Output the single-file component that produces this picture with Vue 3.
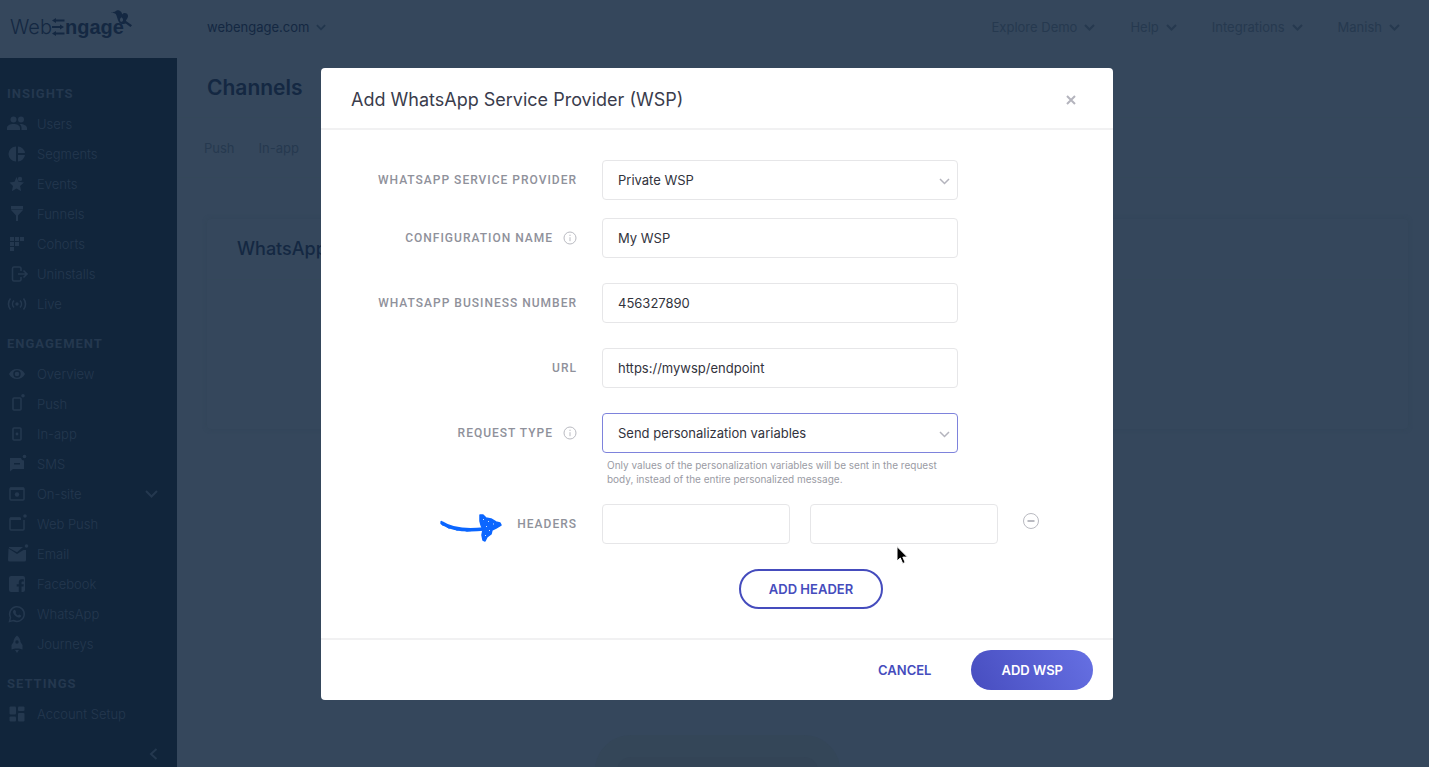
<template>
  <div class="page">
    <header class="topbar">
      <a href="#" class="logo" aria-label="WebEngage">
        <span class="logo-thin">Web</span>
        <svg class="logo-e" width="13" height="18" viewBox="0 0 13 18">
          <path d="M3 2.500h9.500M0 9h9M3 15.500h9.500" stroke="currentColor" stroke-width="2.200" />
          <path d="M0 2.500l4-2.500v5zM12 9l-4-2.500v5zM0 15.500l4-2.500v5z" fill="currentColor" />
        </svg>
        <span class="logo-bold">ngage</span>
        <svg class="logo-bird" width="21" height="18" viewBox="0 0 21 18">
          <path fill="currentColor" d="M0 2.500l3.800-.8C5 .300 6.700-.200 8.300.400c1.700.700 2.600 2.100 2.900 4 1.200-1.600 3.100-1.900 4.500-.9 1.700 1.200 1.600 3.300.5 4.900-.7 1-1.300 1.700-1.200 2.700l6 4.200-1.600 1.800-4.600-3.500c-2.700 1-5.900.2-7.200-2.200C6.500 9 6 6.300 4.800 3.900 3.800 3 1.800 3.200 0 2.500z" />
          <path fill="#35475c" d="M10.600 7.200c-1.600.8-2.300 3-.9 4.500.9.400 2-.2 2.300-1.300.200-1.200-.3-2.500-1.400-3.200z" />
        </svg>
      </a>
      <button class="site" type="button">
        webengage.com
        <svg class="caret" width="10" height="7" viewBox="0 0 11 7"><path d="M1 1l4.500 4.500L10 1" /></svg>
      </button>
      <nav class="top-nav">
        <button v-for="item in topLinks" :key="item" type="button">
          {{ item }}
          <svg class="caret" width="11" height="7" viewBox="0 0 11 7"><path d="M1 1l4.500 4.500L10 1" /></svg>
        </button>
      </nav>
    </header>

    <div class="columns">
      <aside class="sidebar">
        <section v-for="group in menu" :key="group.title" class="group">
          <h2>{{ group.title }}</h2>
          <a v-for="item in group.items" :key="item.name" href="#" class="item">
            <svg width="20" height="20" viewBox="0 0 20 20" v-html="item.icon"></svg>
            <span>{{ item.name }}</span>
            <svg v-if="item.open" class="expand" width="13" height="9" viewBox="0 0 13 9">
              <path d="M1 1l5.500 5.500L12 1" />
            </svg>
          </a>
        </section>
        <button class="collapse" type="button" aria-label="Collapse menu">
          <svg width="9" height="12" viewBox="0 0 9 12"><path d="M7.500 1L2 6l5.500 5" /></svg>
        </button>
      </aside>

      <main class="content">
        <h1>Channels</h1>
        <nav class="tabs">
          <a href="#">Push</a>
          <a href="#">In-app</a>
        </nav>
        <section class="card">
          <h3>WhatsApp</h3>
        </section>
      </main>
    </div>
    <div class="glow"></div>

    <div class="overlay">
      <form class="modal" role="dialog" aria-labelledby="modal-title" @submit.prevent>
        <div class="modal-head">
          <h2 id="modal-title">Add WhatsApp Service Provider (WSP)</h2>
          <button type="button" aria-label="Close">
            <svg width="10" height="10" viewBox="0 0 10 10"><path d="M1 1l8 8M9 1L1 9" /></svg>
          </button>
        </div>

        <div class="modal-body">
          <div class="row tight">
            <label for="provider">WHATSAPP SERVICE PROVIDER</label>
            <div class="control select">
              <select id="provider" v-model="form.provider">
                <option>Private WSP</option>
              </select>
              <svg width="11" height="7" viewBox="0 0 11 7"><path d="M1 1l4.500 4.500L10 1" /></svg>
            </div>
          </div>

          <div class="row">
            <label for="config">
              CONFIGURATION NAME
              <svg class="info" width="14" height="14" viewBox="0 0 14 14">
                <circle cx="7" cy="7" r="6" /><path d="M7 6.200v4M7 3.700v1.300" />
              </svg>
            </label>
            <input id="config" v-model="form.name" class="control" type="text" />
          </div>

          <div class="row">
            <label for="number">WHATSAPP BUSINESS NUMBER</label>
            <input id="number" v-model="form.number" class="control" type="text" />
          </div>

          <div class="row">
            <label for="url">URL</label>
            <input id="url" v-model="form.url" class="control" type="text" />
          </div>

          <div class="row tight">
            <label for="request">
              REQUEST TYPE
              <svg class="info" width="14" height="14" viewBox="0 0 14 14">
                <circle cx="7" cy="7" r="6" /><path d="M7 6.200v4M7 3.700v1.300" />
              </svg>
            </label>
            <div>
              <div class="control select active">
                <select id="request" v-model="form.type">
                  <option>Send personalization variables</option>
                </select>
                <svg width="11" height="7" viewBox="0 0 11 7"><path d="M1 1l4.500 4.500L10 1" /></svg>
              </div>
              <p class="help">
                Only values of the personalization variables will be sent in the request body, instead of
                the entire personalized message.
              </p>
            </div>
          </div>

          <div class="row headers">
            <label for="header-key">HEADERS</label>
            <svg class="pointer" width="64" height="30" viewBox="0 0 64 30">
              <path d="M3 10c9 6 24 8 42 6" fill="none" stroke="#0b66ff" stroke-width="3.500" stroke-linecap="round" />
              <path d="M2 8l2 4 3 0 3 3 4-1 4 3 5-1 5 2 6-1 5 0" fill="none" stroke="#0b66ff" stroke-width="1.500" />
              <path d="M41 2L44 2 47 5 52 6 57 9 61 10 62 12 57 15 53 17 52 21 48 24 46 28 44 27 43 22 44 17 42 12 41 8z" fill="#0b66ff" stroke="#0b66ff" stroke-width="1.500" stroke-linejoin="round" />
              <path d="M44 6l1 1M49 8l1 1M47 13l1 1M54 11l1 0M46 22l1 1M50 18l1-1" stroke="#cfe1ff" stroke-width="1" />
            </svg>
            <div class="pair">
              <input id="header-key" v-model="form.key" type="text" aria-label="Header key" />
              <input v-model="form.value" type="text" aria-label="Header value" />
              <button type="button" aria-label="Remove header">
                <svg width="18" height="18" viewBox="0 0 18 18">
                  <circle cx="9" cy="9" r="7.500" /><path d="M5.500 9h7" />
                </svg>
              </button>
              <svg class="cursor" width="14" height="21" viewBox="0 0 14 21">
                <path d="M2 1.500v14.500l3.300-3 2.400 5.500 2.500-1-2.400-5.400h4.700z" fill="#000" stroke="#fff" stroke-width="1" />
              </svg>
            </div>
          </div>

          <div class="row add">
            <button type="button" class="outline">ADD HEADER</button>
          </div>
        </div>

        <div class="modal-foot">
          <button type="button" class="cancel">CANCEL</button>
          <button type="submit" class="primary">ADD WSP</button>
        </div>
      </form>
    </div>
  </div>
</template>

<script setup>
import { reactive } from 'vue';

const topLinks = ['Explore Demo', 'Help', 'Integrations', 'Manish'];

const form = reactive({
  provider: 'Private WSP',
  name: 'My WSP',
  number: '456327890',
  url: 'https://mywsp/endpoint',
  type: 'Send personalization variables',
  key: '',
  value: '',
});

const line = 'fill="none" stroke="currentColor"';

const menu = [
  {
    title: 'INSIGHTS',
    items: [
      { name: 'Users', icon: '<circle cx="6.500" cy="5.500" r="3"/><circle cx="14" cy="5.500" r="3"/><path d="M0 16v-2c0-2.500 3-4 6.500-4s6.500 1.500 6.500 4v2zM14.500 16v-2c0-1.600-.7-3-2-4 4-.3 7.500 1.500 7.500 4v2z"/>' },
      { name: 'Segments', icon: '<path d="M9 2.500v15a7.500 7.500 0 0 1 0-15zM11 2.500a7.500 7.500 0 0 1 7 6.500h-7zM11 11h7a7.500 7.500 0 0 1-7 6.500z"/>' },
      { name: 'Events', icon: '<path d="M9.500 3l2 4.800 5.500.6-4 3.600 1.200 5.300-4.700-2.800-4.700 2.800L6 12 2.500 8.400l5-.6z"/><circle cx="13" cy="5" r="2.200"/>' },
      { name: 'Funnels', icon: '<path d="M4 2h12v3.500H4zM4 6h12l-5 5.500V17H9v-5.500z"/>' },
      { name: 'Cohorts', icon: '<path d="M3 3h4v4H3zM8 3h4v4H8zM13 3h4v4h-4zM3 8h4v4H3zM8 8h4v4H8zM3 13h4v4H3z"/>' },
      { name: 'Uninstalls', icon: `<path ${line} stroke-width="1.600" d="M14 7V4.500c0-1-.5-1.500-1.500-1.500H7C6 3 5.500 3.500 5.500 4.500v11c0 1 .5 1.500 1.500 1.500h5.500c1 0 1.500-.5 1.500-1.500V13M11 10h9M16.500 6.500L20 10l-3.500 3.500"/>` },
      { name: 'Live', icon: `<circle cx="10" cy="10" r="1.700"/><path ${line} stroke-width="1.600" d="M7 6.500a5 5 0 0 0 0 7M13 6.500a5 5 0 0 1 0 7M3.500 4.500a8.500 8.500 0 0 0 0 11M16.500 4.500a8.500 8.500 0 0 1 0 11"/>` },
    ],
  },
  {
    title: 'ENGAGEMENT',
    items: [
      { name: 'Overview', icon: '<path fill-rule="evenodd" d="M2 10c1.700-3.300 4.600-5 8-5s6.300 1.700 8 5c-1.700 3.300-4.600 5-8 5s-6.300-1.700-8-5zm8-3.700a3.700 3.700 0 1 0 0 7.400 3.700 3.700 0 0 0 0-7.400z"/><circle cx="10" cy="10" r="2.300"/>' },
      { name: 'Push', icon: `<rect ${line} stroke-width="1.600" x="6" y="4" width="8" height="12" rx="1"/><circle cx="16" cy="1.800" r="1.800"/>` },
      { name: 'In-app', icon: `<rect ${line} stroke-width="1.600" x="6" y="4" width="8" height="12" rx="1"/><circle cx="10" cy="10" r="1.400"/>` },
      { name: 'SMS', icon: '<path fill-rule="evenodd" d="M3 4h11l1 2 2 .5V15H6l-3 2.500zm4 5v1.500h6V9z"/><circle cx="17.500" cy="2.500" r="1.800"/>' },
      { name: 'On-site', icon: `<rect ${line} stroke-width="1.500" x="3" y="4" width="14" height="12" rx="1"/><path d="M3 3.500h14V6H3z"/><circle cx="10" cy="10.500" r="2.200"/>`, open: true },
      { name: 'Web Push', icon: `<path ${line} stroke-width="1.500" d="M13 4H4Q3 4 3 5v10q0 1 1 1h12q1 0 1-1V6"/><path d="M3 3.500h11V6H3z"/><circle cx="18" cy="2" r="1.800"/>` },
      { name: 'Email', icon: '<path d="M2 3h14l-6 5.200L2 4zM1.500 4.500L10 10l6.500-4H19v10q0 1.500-1.500 1.500h-15Q1 17.500 1 16z"/><circle cx="19.500" cy="2" r="1.800"/>' },
      { name: 'Facebook', icon: '<path fill-rule="evenodd" d="M4 2h12q2 0 2 2v12q0 2-2 2h-1.500v-5.500h2l.3-2.300h-2.300V8.600c0-.7.4-1 1-1h1.300V5.300h-2c-2 0-3 1.200-3 3v1.900H9.700v2.300h2.100V18H4q-2 0-2-2V4q0-2 2-2z"/>' },
      { name: 'WhatsApp', icon: `<path ${line} stroke-width="1.500" d="M2.500 17.500l1-4a7.300 7.300 0 1 1 3 3z"/><path d="M7 6l1-.3 1.200 2.300-.6 1.100c.6 1.100 1.300 1.800 2.400 2.300l1.100-1 2.200 1.100c-.1 1.600-1.500 2.400-3 2C8.200 12.700 6 10 6 7.600 6 7 6.400 6.400 7 6z"/>` },
      { name: 'Journeys', icon: '<path fill-rule="evenodd" d="M10 1.500c2.500 2 3.500 4.200 3.500 6.500l2 3v4.500L12 14.500H8l-3.500 1V11l2-3c0-2.300 1-4.500 3.500-6.500zm0 4.800a1.700 1.700 0 1 0 0 3.400 1.700 1.700 0 0 0 0-3.400z"/><path d="M8 16h4l-2 3z"/>' },
    ],
  },
  {
    title: 'SETTINGS',
    items: [
      { name: 'Account Setup', icon: '<rect x="2.500" y="2.500" width="6.500" height="8" rx="1"/><rect x="11" y="2.500" width="6.500" height="4.500" rx="1"/><rect x="2.500" y="12.500" width="6.500" height="5" rx="1"/><rect x="11" y="9" width="6.500" height="8.500" rx="1"/>' },
    ],
  },
];
</script>

<style>
body {
  background: #35475c;
}
</style>

<style scoped>
* {
  box-sizing: border-box;
}

.page {
  position: relative;
  display: flex;
  flex-direction: column;
  min-height: 100vh;
  overflow: hidden;
  background: #35475c;
  color: #142842;
  font-family: Inter, "Liberation Sans", sans-serif;
  font-size: 13px;
}

h1, h2, h3, p {
  margin: 0;
}

a {
  color: inherit;
  text-decoration: none;
}

button, input, select {
  padding: 0;
  border: 0;
  background: none;
  color: inherit;
  font: inherit;
}

button {
  cursor: pointer;
}

svg {
  flex: none;
}

/* top bar */
.topbar {
  display: flex;
  align-items: center;
  height: 58px;
  padding: 0 29px 4px 10px;
}

.logo {
  position: relative;
  display: flex;
  align-items: center;
  width: 197px;
}

.logo-thin {
  font-size: 20px;
  font-weight: 300;
}

.logo-bold {
  font-family: "Liberation Sans", sans-serif;
  font-size: 20px;
  font-weight: 700;
}

.logo-bird {
  position: absolute;
  left: 101px;
  top: -5px;
}

.caret {
  fill: none;
  stroke: currentColor;
  stroke-width: 2;
}

.site,
.top-nav button {
  display: flex;
  align-items: center;
  gap: 7px;
}

.site .caret {
  color: #22364d;
}

.top-nav {
  display: flex;
  gap: 35px;
  margin-left: auto;
  color: #26394f;
}

.columns {
  display: flex;
  flex: 1;
}

/* sidebar */
.sidebar {
  display: flex;
  flex-direction: column;
  flex: none;
  width: 177px;
  padding: 21px 19px 4px 7px;
  background: #11253b;
  color: #24384f;
}

.group {
  margin-bottom: 10px;
}

.group h2 {
  font-family: Roboto, "Liberation Sans", sans-serif;
  font-size: 13px;
  font-weight: 700;
  line-height: 30px;
  letter-spacing: 1px;
}

.item {
  display: flex;
  align-items: center;
  gap: 10px;
  height: 30px;
  font-weight: 300;
}

.item svg {
  fill: currentColor;
  overflow: visible;
}

.item .expand {
  margin-left: auto;
  fill: none;
  stroke: currentColor;
  stroke-width: 2;
}

.collapse {
  align-self: flex-end;
  margin-top: auto;
}

.collapse svg {
  fill: none;
  stroke: currentColor;
  stroke-width: 2;
}

/* content behind the dialog */
.content {
  flex: 1;
}

.content h1 {
  height: 60px;
  padding-left: 30px;
  border-bottom: 1px solid #34485a;
  font-size: 21px;
  font-weight: 600;
  line-height: 60px;
}

.tabs {
  display: flex;
  gap: 24px;
  height: 60px;
  padding-left: 27px;
  border-bottom: 1px solid #34485a;
  color: #26394f;
  line-height: 60px;
}

.card {
  height: 210px;
  margin: 41px 21px 0 30px;
  border-radius: 4px;
  box-shadow: 0 0 4px #324557;
}

.card h3 {
  height: 61px;
  padding-left: 30px;
  border-bottom: 1px solid #34485a;
  font-size: 18px;
  font-weight: 500;
  line-height: 60px;
}

.glow {
  position: absolute;
  left: 595px;
  bottom: -40px;
  width: 245px;
  height: 72px;
  border: 22px solid #344658;
  border-radius: 40px;
  background: #334456;
}

/* dialog */
.overlay {
  position: absolute;
  inset: 0;
  display: flex;
  align-items: center;
  justify-content: center;
  padding: 0 5px 0 10px;
}

.modal {
  width: 792px;
  max-width: 100%;
  border-radius: 4px;
  background: #fff;
  color: #32333d;
}

.modal-head {
  display: flex;
  align-items: center;
  justify-content: space-between;
  height: 62px;
  padding: 4px 37px 0 30px;
  border-bottom: 2px solid #f1f1f2;
}

.modal-head h2 {
  color: #3a3c4c;
  font-size: 18px;
  font-weight: 400;
}

.modal-head svg {
  display: block;
  fill: none;
  stroke: #b4b4bd;
  stroke-width: 2;
}

.modal-body {
  padding: 30px 30px 29px;
}

.row {
  position: relative;
  display: grid;
  grid-template-columns: 226px minmax(0, 356px);
  column-gap: 25px;
  align-items: start;
  margin-bottom: 25px;
}

.row.tight {
  margin-bottom: 18px;
}

.row.headers,
.row.add {
  grid-template-columns: 226px minmax(0, 438px);
}

.row.add {
  margin-bottom: 0;
}

.row label {
  display: flex;
  align-items: center;
  justify-content: flex-end;
  gap: 10px;
  height: 40px;
  color: #8f919b;
  font-family: Roboto, "Liberation Sans", sans-serif;
  font-size: 12px;
  font-weight: 500;
  letter-spacing: 1px;
}

.info {
  fill: none;
  stroke: #b9bac1;
  stroke-width: 1;
}

.row input,
.select {
  width: 100%;
  height: 40px;
  border: 1px solid #e6e6e8;
  border-radius: 4px;
}

.row input {
  padding: 0 15px;
}

.select {
  position: relative;
}

.select.active {
  border-color: #7e83dc;
}

.select select {
  width: 100%;
  height: 100%;
  padding: 0 30px 0 15px;
  appearance: none;
}

.select svg {
  position: absolute;
  top: 17px;
  right: 7px;
  fill: none;
  stroke: #b4b4bd;
  stroke-width: 1.5;
  pointer-events: none;
}

.help {
  margin: 5px 0 0 5px;
  color: #9a9ba4;
  font-size: 10px;
  line-height: 14px;
}

.pair {
  position: relative;
  display: flex;
  align-items: flex-start;
  gap: 20px;
}

.pair input {
  flex: 1;
  min-width: 0;
}

.pair button {
  height: 34px;
  margin-left: 4px;
}

.pair button svg {
  display: block;
  fill: none;
  stroke: #b9bac1;
}

.pair button path {
  stroke-width: 2;
}

.pointer {
  position: absolute;
  left: 88px;
  top: 9px;
}

.cursor {
  position: absolute;
  left: 293px;
  top: 41px;
}

.outline {
  grid-column: 2;
  justify-self: center;
  height: 40px;
  margin-right: 20px;
  padding: 0 28px;
  border: 2px solid #454cbd;
  border-radius: 20px;
  color: #454cbd;
  font-weight: 600;
}

.modal-foot {
  display: flex;
  align-items: center;
  justify-content: flex-end;
  gap: 40px;
  height: 62px;
  padding-right: 20px;
  border-top: 2px solid #f1f1f2;
}

.cancel {
  color: #454cbd;
  font-weight: 600;
}

.primary {
  height: 40px;
  padding: 0 30px;
  border-radius: 20px;
  background: linear-gradient(60deg, #474dbf, #6670e3);
  color: #fff;
  font-weight: 600;
}
</style>
